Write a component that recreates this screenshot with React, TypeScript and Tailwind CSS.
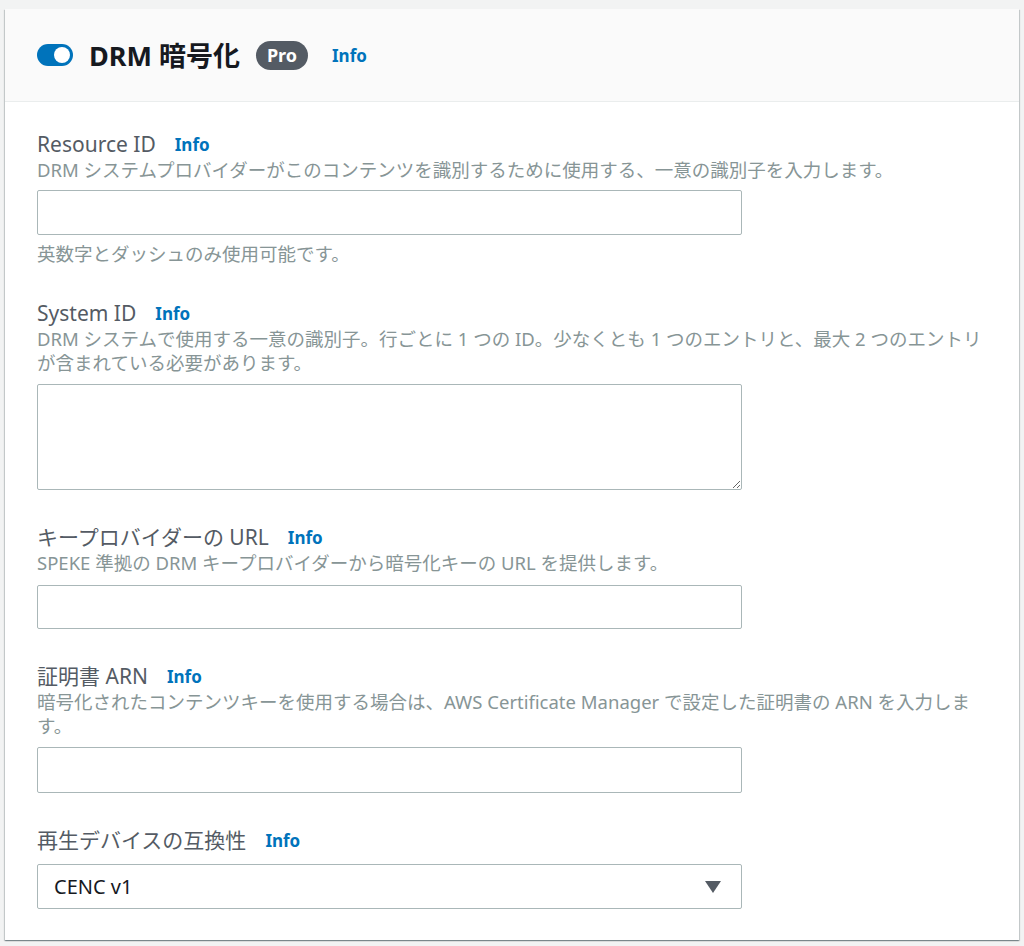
import React from 'react';

const font = { fontFamily: '"Noto Sans", "Noto Sans CJK JP", sans-serif' };

const Info = () => (
  <a href="#" className="text-[17px] font-bold leading-none text-[#0073bb]">Info</a>
);

const Label = ({ text }: { text: string }) => (
  <div className="flex items-center gap-[19px] h-[28px]">
    <span className="text-[21px] text-[#545b64] leading-[28px]">{text}</span>
    <span className="pt-[2px]"><Info /></span>
  </div>
);

const Desc = ({ children }: { children: React.ReactNode }) => (
  <p className="text-[18.5px] text-[#879596] leading-[24px]">{children}</p>
);

const inputClass = 'block w-[705px] rounded-[2px] border border-[#aab7b8] bg-white outline-none';

const App = () => {
  return (
    <div className="min-h-[946px] bg-[#f2f3f3] px-[5px] pt-[9px]" style={font}>
      <div className="bg-white shadow-[0_1px_1px_0_rgba(0,28,36,0.3),1px_1px_1px_0_rgba(0,28,36,0.15),-1px_1px_1px_0_rgba(0,28,36,0.15)]">
        <div className="flex h-[93px] items-center border-b border-[#eaeded] bg-[#fafafa] px-8">
          <button className="relative h-[22px] w-[36px] rounded-full bg-[#0073bb]" aria-label="toggle">
            <span className="absolute right-[3px] top-[3px] h-[16px] w-[16px] rounded-full bg-white" />
          </button>
          <h2 className="ml-[16px] text-[27px] font-bold text-[#16191f] leading-none">DRM 暗号化</h2>
          <span className="ml-[16px] flex h-[29px] w-[52px] items-center justify-center rounded-full bg-[#545b64] text-[18px] font-bold text-white">Pro</span>
          <span className="ml-[24px] pt-[2px]"><Info /></span>
        </div>

        <div className="flex flex-col gap-[33px] px-8 pt-[28px] pb-[31px]">
          <div>
            <Label text="Resource ID" />
            <Desc>DRM システムプロバイダーがこのコンテンツを識別するために使用する、一意の識別子を入力します。</Desc>
            <input className={`${inputClass} mt-2 h-[45px]`} />
            <p className="mt-[7px] text-[18.5px] leading-[24px] text-[#879596]">英数字とダッシュのみ使用可能です。</p>
          </div>

          <div>
            <Label text="System ID" />
            <Desc>DRM システムで使用する一意の識別子。行ごとに 1 つの ID。少なくとも 1 つのエントリと、最大 2 つのエントリが含まれている必要があります。</Desc>
            <textarea className={`${inputClass} mt-[9px] h-[106px]`} />
          </div>

          <div>
            <Label text="キープロバイダーの URL" />
            <Desc>SPEKE 準拠の DRM キープロバイダーから暗号化キーの URL を提供します。</Desc>
            <input className={`${inputClass} mt-[10px] h-[44px]`} />
          </div>

          <div>
            <Label text="証明書 ARN" />
            <Desc>暗号化されたコンテンツキーを使用する場合は、AWS Certificate Manager で設定した証明書の ARN を入力します。</Desc>
            <input className={`${inputClass} mt-[9px] h-[46px]`} />
          </div>

          <div>
            <Label text="再生デバイスの互換性" />
            <div className={`${inputClass} mt-[10px] flex h-[45px] items-center justify-between pl-[16px] pr-[20px]`}>
              <span className="text-[20px] text-[#16191f]">CENC v1</span>
              <svg width="16" height="12" viewBox="0 0 16 12">
                <polygon points="0,0 16,0 8,12" fill="#545b64" />
              </svg>
            </div>
          </div>
        </div>
      </div>
    </div>
  );
};

export default App;
